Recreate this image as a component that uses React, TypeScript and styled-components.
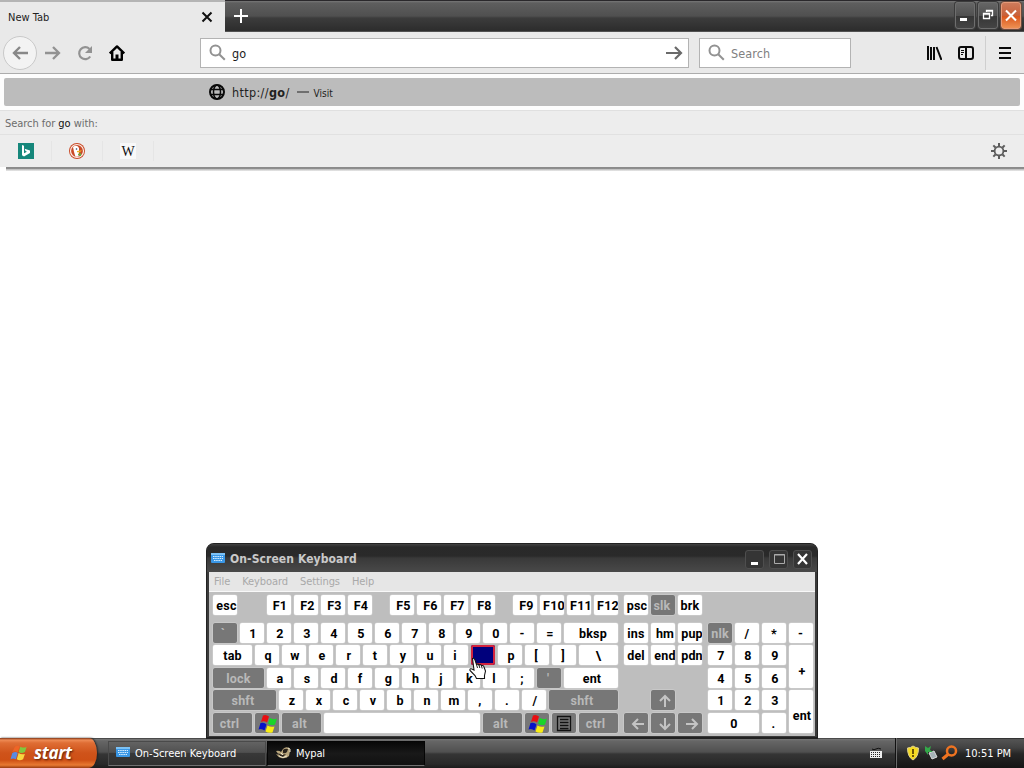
import React from "react";
import styled, { createGlobalStyle } from "styled-components";

const GlobalStyle = createGlobalStyle`
  * {
    box-sizing: border-box;
  }
  body {
    margin: 0;
    overflow: hidden;
    background: #fff;
    font-family: "DejaVu Sans Condensed", "DejaVu Sans", sans-serif;
    font-stretch: condensed;
    font-size: 11px;
  }
`;

const Desktop = styled.div`
  position: relative;
  width: 1024px;
  height: 768px;
  display: flex;
  flex-direction: column;
  overflow: hidden;
  background: #fff;
`;

const Label = styled.span<{ $w?: number }>`
  white-space: pre;
  letter-spacing: ${(p) => p.$w ?? 0}px;
`;

// Browser
const TabStrip = styled.div`
  height: 32px;
  display: flex;
  flex-shrink: 0;
  border-top: 1px solid #2a282b;
  background: linear-gradient(#777 0, #5e5e5e 2px, #505050 15px, #3c3c3c 17px, #2c2c2c 30px, #777 31px);
`;

const Tab = styled.div`
  width: 225px;
  height: 32px;
  margin-top: -1px;
  padding: 0 12px 0 8px;
  display: flex;
  align-items: center;
  justify-content: space-between;
  color: #222;
  background: #e9e9e9;
  border-top: 2px solid #b4b4b4;
`;

const NewTab = styled.div`
  flex: 1;
  padding: 8px 0 0 9px;
`;

const WindowButtons = styled.div`
  display: flex;
  gap: 3px;
  padding: 1px 3px 0 0;
`;

const WindowButton = styled.div<{ $close?: boolean }>`
  width: 20px;
  height: 27px;
  border-radius: 3px;
  border: 1px solid ${(p) => (p.$close ? "#e69a78" : "#6e6e6e")};
  box-shadow: 0 0 0 1px ${(p) => (p.$close ? "#6b4a3c" : "#3b3b3b")};
  background: ${(p) =>
    p.$close
      ? "linear-gradient(#cd7b5b, #c8603a 50%, #d9551c 52%, #ee9052)"
      : "linear-gradient(#656565, #505050 50%, #363636 52%, #444)"};
  svg {
    display: block;
  }
`;

const NavBar = styled.div`
  height: 42px;
  flex-shrink: 0;
  display: flex;
  align-items: center;
  background: #e9e9e9;
  border-bottom: 1px solid #acacac;
  padding: 0 12px 0 3px;
`;

const BackButton = styled.div`
  width: 34px;
  height: 34px;
  border-radius: 50%;
  border: 1px solid #c9c9c9;
  background: #f3f3f3;
  display: flex;
  align-items: center;
  justify-content: center;
`;

const NavIcons = styled.div`
  display: flex;
  gap: 16px;
  margin-left: 8px;
  width: 155px;
`;

const Field = styled.div<{ $width: number }>`
  width: ${(p) => p.$width}px;
  height: 30px;
  display: flex;
  align-items: center;
  padding: 0 5px 0 8px;
  margin-right: 10px;
  background: #fff;
  border: 1px solid #b3b3b3;
  font-size: 12.5px;
  color: #1c1c1c;
`;

const FieldText = styled.span<{ $muted?: boolean }>`
  flex: 1;
  margin-left: 6px;
  padding-top: 1px;
  letter-spacing: ${(p) => (p.$muted ? 0.1 : 0)}px;
  color: ${(p) => (p.$muted ? "#808080" : "#1c1c1c")};
`;

const ToolIcons = styled.div`
  display: flex;
  align-items: center;
  gap: 16px;
  margin-left: auto;
`;

const Separator = styled.div`
  width: 1px;
  height: 34px;
  margin: 0 -3px 0 -5px;
  background: #cfcfcf;
`;

const Suggestions = styled.div`
  height: 93px;
  flex-shrink: 0;
  background: #fdfdfd;
  padding-top: 4px;
`;

const Suggestion = styled.div`
  height: 28px;
  margin: 0 4px;
  padding: 0 0 0 205px;
  display: flex;
  align-items: center;
  gap: 7px;
  border-radius: 2px;
  background: #bcbcbc;
  color: #222;
  font-size: 12.5px;
  small {
    margin-left: -2px;
    padding-top: 2px;
    font-size: 10px;
  }
`;

const SearchWith = styled.div`
  height: 25px;
  margin-top: 4px;
  padding: 2px 5px 0;
  display: flex;
  align-items: center;
  border-top: 1px solid #e0e0e0;
  border-bottom: 1px solid #e1e1e1;
  background: #ededed;
  color: #6c6c6c;
  b {
    color: #111;
    font-weight: 400;
  }
`;

const Engines = styled.div`
  height: 32px;
  display: flex;
  align-items: center;
  padding: 0 16px 0 1px;
  background: #ededed;
`;

const Engine = styled.div`
  width: 51px;
  height: 20px;
  display: flex;
  align-items: center;
  justify-content: center;
  border-right: 1px solid #e5e5e5;
`;

const Wiki = styled.span`
  width: 16px;
  height: 16px;
  background: #f9f9f9;
  font: 14px/17px "Liberation Serif", serif;
  text-align: center;
  color: #111;
`;

const Gear = styled.div`
  margin-left: auto;
  height: 18px;
`;

const PopupEdge = styled.div`
  height: 4px;
  flex-shrink: 0;
  margin-left: 6px;
  background: linear-gradient(#8a8a8a 0, #8f8f8f 2px, #b5b5b5 2px, #ececec 4px);
`;

const Page = styled.div`
  flex: 1;
`;

// On-screen keyboard
const KeyboardWindow = styled.div`
  position: absolute;
  left: 206px;
  top: 543px;
  width: 612px;
  height: 196px;
  border-radius: 8px 8px 0 0;
  background: #3a3a3a;
  border: 1px solid #222;
  border-bottom-width: 2px;
  padding: 0 2px 1px;
`;

const TitleBar = styled.div`
  height: 28px;
  margin: 0 -2px;
  border-radius: 7px 7px 0 0;
  padding: 2px 5px 0 4px;
  display: flex;
  align-items: center;
  gap: 5px;
  background: linear-gradient(#424242 0, #292929 3px, #2a2a2a 12px, #393939 14px, #494949);
`;

const TitleText = styled.span`
  flex: 1;
  color: #c9c9c9;
  font-size: 12px;
  font-weight: 700;
  letter-spacing: 0.1px;
  white-space: pre;
`;

const TitleButton = styled.div`
  width: 19px;
  height: 19px;
  border: 1px solid #4e4e4e;
  border-radius: 3px;
  background: #353535;
  svg {
    display: block;
  }
`;

const MenuBar = styled.div`
  height: 20px;
  padding: 0 5px 1px;
  display: flex;
  align-items: center;
  gap: 12px;
  color: #a9a9a9;
  letter-spacing: -0.08px;
  background: #e6e6e6;
  border-bottom: 1px solid #f8f8f8;
`;

const KeyArea = styled.div`
  height: 144px;
  padding: 3px 2px 0 4px;
  background: #bebebe;
`;

const Blocks = styled.div`
  display: flex;
  gap: 6px;
`;

const FunctionRow = styled(Blocks)`
  margin-bottom: 8px;
`;

const Block = styled.div`
  display: flex;
  flex-direction: column;
  gap: 2.4px;
`;

const KeyRow = styled.div`
  height: 20px;
  display: flex;
  gap: 3px;
`;

const NumPad = styled.div`
  display: grid;
  grid-template-columns: repeat(4, 24px);
  grid-template-rows: repeat(5, 20px);
  gap: 2.4px 3px;
`;

const KeyCap = styled.div<{ $w: number; $dark?: boolean; $active?: boolean; $tall?: boolean; $before?: number; $nudge?: number }>`
  width: ${(p) => p.$w}px;
  height: ${(p) => (p.$tall ? "auto" : "20px")};
  ${(p) => p.$tall && "grid-row: span 2;"}
  ${(p) => p.$w === 51 && "grid-column: span 2;"}
  margin-left: ${(p) => p.$before ?? 0}px;
  padding-left: ${(p) => Math.max(p.$nudge ?? 2, 0)}px;
  padding-right: ${(p) => Math.max(-(p.$nudge ?? 2), 0)}px;
  padding-top: ${(p) => (p.$tall ? 10 : 2)}px;
  display: flex;
  flex-shrink: 0;
  align-items: center;
  justify-content: center;
  overflow: hidden;
  border-radius: 2px;
  color: ${(p) => (p.$dark ? "#b9b9b9" : "#000")};
  background: ${(p) => (p.$active ? "#00007c" : p.$dark ? "#777" : "#fff")};
  box-shadow: ${(p) => (p.$active ? "inset 0 0 0 2px #d3233e" : "0 0 0 0.5px #d2d2d2")};
  font: 700 12.5px/16px Roboto, "Liberation Sans", sans-serif;
  letter-spacing: 0.2px;
  white-space: pre;
`;

const Hand = styled.svg`
  position: absolute;
  left: 468px;
  top: 656px;
`;

// Taskbar
const Taskbar = styled.div`
  height: 30px;
  flex-shrink: 0;
  display: flex;
  background: linear-gradient(#1f1f1f 0, #777 1px, #666 3px, #505050 14px, #353535 16px, #292929 26px, #1b1b1b);
`;

const StartButton = styled.div`
  width: 97px;
  display: flex;
  align-items: center;
  gap: 5px;
  padding: 0 0 1px 10px;
  border-radius: 0 8px 8px 0 / 0 15px 15px 0;
  background: linear-gradient(#803517 0, #ee8b55 2px, #df6d34 5px, #cf531a 15px, #ce5016 22px, #e87a32 27px, #9a3d12);
  box-shadow: 1px 0 2px #222;
  color: #fff;
  font: italic 700 17px "Open Sans", "Noto Sans", sans-serif;
  letter-spacing: -0.3px;
  text-shadow: 1px 1px 2px #5c2108;
`;

const Task = styled.div<{ $pressed?: boolean }>`
  width: 158px;
  height: 25px;
  margin: 3px 1px 0 0;
  padding: 0 7px 1px;
  display: flex;
  align-items: center;
  gap: 5px;
  color: #fff;
  border: 1px solid ${(p) => (p.$pressed ? "#050505" : "#4a4a4a")};
  border-bottom-color: #707070;
  background: ${(p) => (p.$pressed ? "linear-gradient(#080808, #191919 50%, #111)" : "linear-gradient(#636363, #505050 45%, #383838 50%, #303030)")};
`;

const TaskList = styled.div`
  display: flex;
  margin-left: 11px;
`;

const LanguageBar = styled.div`
  margin-left: auto;
  padding: 9px 12px 0 0;
`;

const Tray = styled.div`
  width: 129px;
  display: flex;
  align-items: center;
  padding-left: 9px;
  gap: 2px;
  color: #fff;
  border-left: 1px solid #111;
  box-shadow: inset 1px 0 #6a6a6a;
  background: linear-gradient(#111 0, #555 1px, #414141 10px, #262626 16px, #151515);
`;

const Clock = styled.span`
  margin-left: 5px;
  white-space: pre;
`;

type KeyDef = { t: React.ReactNode; w?: number; dark?: boolean; active?: boolean; tall?: boolean; before?: number; nudge?: number };

const chars = (s: string): KeyDef[] => s.split("").map((t) => ({ t }));

const Flag = () => (
  <svg width="20" height="20" viewBox="0 0 20 20">
    <path d="M5 1.5q3-1.5 6 1L9 8.5Q6 6.500 3 8z" fill="#e80e12" />
    <path d="M12 4q3 2 7 .5l-2 6q-4 1.500-7-1z" fill="#19d529" />
    <path d="M2.500 9q4-1 6 1.500l-2 6q-3-2.500-6-1z" fill="#0712c8" />
    <path d="M9.500 11.500q3 2 7 1l-2 6q-4 1-7-1z" fill="#f8ed13" />
  </svg>
);

const Arrow = ({ turn }: { turn: number }) => (
  <svg width="16" height="16" viewBox="0 0 16 16">
    <path d="M14 8H3M8 3L3 8l5 5" fill="none" stroke="#c4c4c4" strokeWidth="2" transform={`rotate(${turn} 8 8)`} />
  </svg>
);

const MenuKey = () => (
  <svg width="16" height="18" viewBox="0 0 16 18">
    <path d="M1.5 1.5h13v14h-13zM4 4.500h8.500M4 7.500h8.500M4 10.500h8.500M4 13.500h8.500" fill="none" stroke="#111" strokeWidth="1.3" />
  </svg>
);

const KeyboardIcon = () => (
  <svg width="14" height="12" viewBox="0 0 14 12">
    <rect x="0" y="0" width="14" height="10" rx="1" fill="#3a97e6" />
    <rect x="0" y="0" width="14" height="2" fill="#7cc2f6" />
    <path d="M2 3.500h10M2 5.500h10M3 7.500h8" stroke="#d6eeff" strokeDasharray="1.5 .7" strokeWidth="1.2" />
  </svg>
);

const Magnifier = () => (
  <svg width="17" height="17" viewBox="0 0 17 17" fill="none" stroke="#929292" strokeWidth="2">
    <circle cx="6.5" cy="6.5" r="5" />
    <path d="M10.2 10.2l5.6 5.6" />
  </svg>
);

const functionKeys: KeyDef[] = [
  { t: "esc", nudge: 3 },
  { t: "F1", before: 27 },
  { t: "F2", nudge: 3 },
  { t: "F3", nudge: 3 },
  { t: "F4" },
  { t: "F5", before: 15, nudge: 3 },
  { t: "F6", nudge: 3 },
  { t: "F7", nudge: 3 },
  { t: "F8", nudge: 3 },
  { t: "F9", before: 15, nudge: 3 },
  { t: "F10", nudge: 4 },
  { t: "F11", nudge: 4 },
  { t: "F12", nudge: 4 },
];

const mainRows: KeyDef[][] = [
  [{ t: "`", dark: true, nudge: -4 }, ...chars("1234567890"), { t: "-", nudge: 0 }, { t: "=" }, { t: "bksp", w: 54, nudge: 4 }],
  [
    { t: "tab", w: 39, nudge: 0 },
    ...chars("qwer"),
    { t: "t", nudge: 0 },
    { t: "y" },
    { t: "u" },
    { t: "i", nudge: -2 },
    { t: "", active: true },
    { t: "p" },
    { t: "[", nudge: -2 },
    { t: "]", nudge: -2 },
    { t: "\\", w: 39, nudge: 0 },
  ],
  [
    { t: "lock", w: 51, dark: true, nudge: 0 },
    ...chars("as"),
    { t: "d" },
    { t: "f", nudge: 0 },
    { t: "g", nudge: 3 },
    { t: "h", nudge: 3 },
    { t: "j", nudge: 0 },
    { t: "k", nudge: 3 },
    { t: "l", nudge: -2 },
    { t: ";", nudge: 0 },
    { t: "'", dark: true, nudge: -2 },
    { t: "ent", w: 54, nudge: 2 },
  ],
  [
    { t: "shft", w: 63, dark: true, nudge: -3 },
    ...chars("zxcvbnm"),
    { t: ",", nudge: 0 },
    { t: ".", nudge: 0 },
    { t: "/" },
    { t: "shft", w: 69, dark: true, nudge: -3 },
  ],
  [
    { t: "ctrl", w: 39, dark: true, nudge: -6 },
    { t: <Flag />, dark: true, nudge: 1 },
    { t: "alt", w: 39, dark: true, nudge: -4 },
    { t: "", w: 156 },
    { t: "alt", w: 39, dark: true, nudge: -4 },
    { t: <Flag />, dark: true, nudge: 1 },
    { t: <MenuKey />, dark: true, nudge: 0 },
    { t: "ctrl", w: 39, dark: true, nudge: -6 },
  ],
];

const navRows: KeyDef[][] = [
  [{ t: "ins", nudge: 0 }, { t: "hm", nudge: 4 }, { t: "pup", nudge: 4 }],
  [{ t: "del", nudge: 0 }, { t: "end", nudge: 4 }, { t: "pdn", nudge: 4 }],
  [],
  [{ t: <Arrow turn={90} />, dark: true, before: 27, nudge: 3 }],
  [
    { t: <Arrow turn={0} />, dark: true, nudge: 3 },
    { t: <Arrow turn={-90} />, dark: true, nudge: 3 },
    { t: <Arrow turn={180} />, dark: true, nudge: 3 },
  ],
];

const numKeys: KeyDef[] = [
  { t: "nlk", dark: true, nudge: 0 },
  { t: "/", nudge: 0 },
  { t: "*", nudge: 0 },
  { t: "-", nudge: -1 },
  ...chars("789"),
  { t: "+", tall: true },
  ...chars("456123"),
  { t: "ent", tall: true },
  { t: "0", w: 51, nudge: 1 },
  { t: ".", nudge: -1 },
];

const Keys = ({ keys }: { keys: KeyDef[] }) => (
  <>
    {keys.map((k, i) => (
      <KeyCap key={i} $w={k.w ?? 24} $dark={k.dark} $active={k.active} $tall={k.tall} $before={k.before} $nudge={k.nudge}>
        {k.t}
      </KeyCap>
    ))}
  </>
);

const OnScreenKeyboard = () => (
  <KeyboardWindow>
    <TitleBar>
      <KeyboardIcon />
      <TitleText>On-Screen Keyboard</TitleText>
      <TitleButton>
        <svg width="17" height="17">
          <path d="M5 12.500h7" stroke="#fff" strokeWidth="3" />
        </svg>
      </TitleButton>
      <TitleButton>
        <svg width="17" height="17">
          <path d="M4.500 3.500h10v9h-10zM4 4h11" fill="none" stroke="#aaa" />
        </svg>
      </TitleButton>
      <TitleButton>
        <svg width="17" height="17">
          <path d="M4 3l9 10M13 3l-9 10" stroke="#fff" strokeWidth="2.2" />
        </svg>
      </TitleButton>
    </TitleBar>
    <MenuBar>
      <span>File</span>
      <span>Keyboard</span>
      <span>Settings</span>
      <span>Help</span>
    </MenuBar>
    <KeyArea>
      <FunctionRow>
        <KeyRow>
          <Keys keys={functionKeys} />
        </KeyRow>
        <KeyRow>
          <Keys keys={[{ t: "psc" }, { t: "slk", dark: true, nudge: -2 }, { t: "brk", nudge: 0 }]} />
        </KeyRow>
      </FunctionRow>
      <Blocks>
        <Block>
          {mainRows.map((row, i) => (
            <KeyRow key={i}>
              <Keys keys={row} />
            </KeyRow>
          ))}
        </Block>
        <Block>
          {navRows.map((row, i) => (
            <KeyRow key={i}>
              <Keys keys={row} />
            </KeyRow>
          ))}
        </Block>
        <NumPad>
          <Keys keys={numKeys} />
        </NumPad>
      </Blocks>
    </KeyArea>
  </KeyboardWindow>
);

const Browser = () => (
  <>
    <TabStrip>
      <Tab>
        <Label>New Tab</Label>
        <svg width="12" height="12">
          <path d="M1.5 1.5l9 9M10.5 1.5l-9 9" stroke="#111" strokeWidth="2" />
        </svg>
      </Tab>
      <NewTab>
        <svg width="14" height="14">
          <path d="M7 0v14M0 7h14" stroke="#fff" strokeWidth="2" />
        </svg>
      </NewTab>
      <WindowButtons>
        <WindowButton>
          <svg width="18" height="25">
            <path d="M4 16.500h7" stroke="#fff" strokeWidth="3" />
          </svg>
        </WindowButton>
        <WindowButton>
          <svg width="20" height="25" viewBox="1 0 20 25">
            <path d="M5.500 10.500h6v5h-6zM5 11h7M8.500 9V7.500h6v5H13M8 8h7" fill="none" stroke="#fff" strokeWidth="1.3" />
          </svg>
        </WindowButton>
        <WindowButton $close>
          <svg width="18" height="25">
            <path d="M4 7.5l10 10M14 7.5l-10 10" stroke="#fff" strokeWidth="2.1" />
          </svg>
        </WindowButton>
      </WindowButtons>
    </TabStrip>
    <NavBar>
      <BackButton>
        <svg width="16" height="14" fill="none" stroke="#888" strokeWidth="2.4">
          <path d="M16 7H2M8 1L2 7l6 6" />
        </svg>
      </BackButton>
      <NavIcons>
        <svg width="16" height="16" fill="none" stroke="#929292" strokeWidth="2.3">
          <path d="M0 8h14M8 2l6 6-6 6" />
        </svg>
        <svg width="16" height="16" fill="none" stroke="#929292" strokeWidth="2.2">
          <path d="M13.2 11.5A6 6 0 1 1 12.5 4" />
          <path d="M15 1v7H8z" fill="#929292" stroke="none" />
        </svg>
        <svg width="16" height="16" fill="none" stroke="#000" strokeWidth="2.4">
          <path d="M.8 8.5L8 1.4l7.2 7.1M3.2 7v7.7h9.6V7" strokeLinejoin="round" />
          <path d="M8 15V9.5" strokeWidth="3" />
        </svg>
      </NavIcons>
      <Field $width={489}>
        <Magnifier />
        <FieldText>go</FieldText>
        <svg width="17" height="14" fill="none" stroke="#6a6a6a" strokeWidth="2.2">
          <path d="M0 7h15M9 1l6 6-6 6" />
        </svg>
      </Field>
      <Field $width={152}>
        <Magnifier />
        <FieldText $muted>Search</FieldText>
      </Field>
      <ToolIcons>
        <svg width="16" height="14" stroke="#0a0a0a" strokeWidth="2">
          <path d="M2 0v14M5 1v13M8 1v13M10.500 1l5 13" />
        </svg>
        <svg width="16" height="14" fill="none" stroke="#0a0a0a" strokeWidth="2">
          <rect x="1" y="1" width="14" height="12" rx="2" />
          <path d="M8 1v12" />
          <path d="M3 4.5h3M3 6.5h3M3 8.5h2" strokeWidth="1" />
        </svg>
        <Separator />
        <svg width="13" height="12" stroke="#0a0a0a" strokeWidth="2">
          <path d="M0 1h12M0 6h12M0 11h12" />
        </svg>
      </ToolIcons>
    </NavBar>
    <Suggestions>
      <Suggestion>
        <svg width="16" height="16" fill="none" stroke="#0a0a0a" strokeWidth="1.5">
          <circle cx="8" cy="8" r="7" strokeWidth="2" />
          <ellipse cx="8" cy="8" rx="3.5" ry="7" />
          <path d="M2 5.5h12M2 10.5h12" />
        </svg>
        <Label $w={0.35}>
          http://<b>go</b>/
        </Label>
        <svg width="12" height="2">
          <path d="M0 1h12" stroke="#222" />
        </svg>
        <small>Visit</small>
      </Suggestion>
      <SearchWith>
        <Label $w={-0.05}>
          Search for <b>go</b> with:
        </Label>
      </SearchWith>
      <Engines>
        <Engine>
          <svg width="16" height="16">
            <rect width="16" height="16" fill="#16877b" />
            <path d="M4 2l2 .8v7.5l3-1.6-1.5-.7-.9-2.3L12 7.4v2.5L6 13.5l-2-1.2z" fill="#fff" />
          </svg>
        </Engine>
        <Engine>
          <svg width="16" height="16">
            <circle cx="8" cy="8" r="8" fill="#c94a27" />
            <circle cx="8" cy="8" r="6.500" fill="none" stroke="#fbeee8" strokeWidth="1.2" />
            <path d="M4 4q4-3 6 1v3l-.5 5.500-3 .3Q5 10 4 4" fill="#fff" />
            <circle cx="7.500" cy="6" r=".8" fill="#26405c" />
            <path d="M8 8l5-.7-2 2H8" fill="#f2b31d" />
            <path d="M9 11l3-1v3l-3-1" fill="#5fae3f" />
          </svg>
        </Engine>
        <Engine>
          <Wiki>W</Wiki>
        </Engine>
        <Gear>
          <svg width="18" height="18" viewBox="-9 -9 18 18" fill="none" stroke="#5c5c5c" strokeWidth="2">
            <circle r="4.4" strokeWidth="1.8" />
            {[0, 45, 90, 135, 180, 225, 270, 315].map((a) => (
              <path key={a} d="M0-5v-3" transform={`rotate(${a})`} />
            ))}
          </svg>
        </Gear>
      </Engines>
    </Suggestions>
    <PopupEdge />
    <Page />
  </>
);

export default function App() {
  return (
    <>
      <GlobalStyle />
      <Desktop>
        <Browser />
        <Taskbar>
          <StartButton>
            <svg width="19" height="18" viewBox="0 0 20 20">
              <path d="M5 3q3-2 5 0L8 9Q5 7 2 9z" fill="#ee6526" />
              <path d="M11 3q4 2 7 0l-2 6q-4 2-7 0z" fill="#80c83d" />
              <path d="M2 10q4-2 6 0l-2 7q-3-2-6 0z" fill="#5a8be0" />
              <path d="M9 10q3 2 7 1l-2 6q-4 2-7 0z" fill="#f8d640" />
            </svg>
            start
          </StartButton>
          <TaskList>
            <Task>
              <KeyboardIcon />
              <Label>On-Screen Keyboard</Label>
            </Task>
            <Task $pressed>
              <svg width="16" height="14" viewBox="0 0 16 14">
                <path d="M1 5q3-1 5 1l2-3q3-3 6-1l1 3-1 5q-3 3-8 2-3-1-5-4l3 1z" fill="#b9a67c" />
                <path d="M8 4q2-2 5-1l-1 3q-2 2-4 1zM3 7l4 2 4-1-3 3q-3 0-5-4" fill="#2b241c" />
                <path d="M13 2l2 1v3M6 7l2 2M4 10q4 3 8 0" fill="none" stroke="#efe6cb" />
              </svg>
              <Label $w={-0.1}>Mypal</Label>
            </Task>
          </TaskList>
          <LanguageBar>
            <svg width="14" height="13">
              <path d="M3 2q2 1.500 4 0t5 0" fill="none" stroke="#111" />
              <rect x="1" y="4" width="12" height="7" fill="#eee" />
              <path d="M2 5.500h10M2 7.500h10M2 9.500h10" stroke="#222" strokeDasharray="1 1" />
            </svg>
          </LanguageBar>
          <Tray>
            <svg width="16" height="16">
              <path d="M8 1q3 2 5.500 2 0 9-5.500 12Q2.500 12 2.500 3q3 0 5.500-2" fill="#f5db22" stroke="#e0d28c" />
              <path d="M8 4v5M8 10v2" stroke="#553e00" strokeWidth="1.7" />
            </svg>
            <svg width="16" height="16">
              <path d="M6 8l5-2 3 6-5 2z" fill="#a6b3b8" stroke="#ddd" />
              <path d="M2 1l3 2 3-2-1 4 3 2H5v3L2 6z" fill="#33a849" />
            </svg>
            <svg width="17" height="16" fill="none" stroke="#ee7321">
              <circle cx="10.500" cy="6" r="4.5" strokeWidth="2.500" />
              <path d="M7.500 9l-6 5" strokeWidth="3.2" />
            </svg>
            <Clock>10:51 PM</Clock>
          </Tray>
        </Taskbar>
        <OnScreenKeyboard />
        <Hand width="20" height="25" viewBox="0 0 20 25">
          <path
            d="M4.500 2.500Q6 1.500 7 4l1.500 4.500q2-1 2.500 .5 2-1 2.500 .7 2-.8 2.500 1.300l1.500 4-1 4.500v3H8.500l-1.500-3-5-5q-.5-2.500 2-1.500l2 1z"
            fill="#fff"
            stroke="#111"
            strokeWidth="1.1"
          />
          <path d="M8.500 8.500l1 3.500M11 9l.8 3M13.500 10l.7 2.500" stroke="#222" />
        </Hand>
      </Desktop>
    </>
  );
}
